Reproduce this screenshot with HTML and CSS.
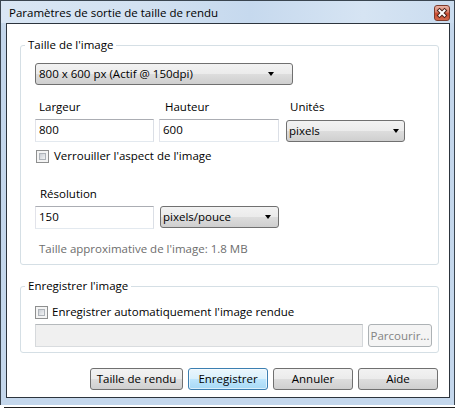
FILE: index.html
```html
<!DOCTYPE html>
<html lang="fr">
<head>
<meta charset="utf-8">
<title>Paramètres de sortie de taille de rendu</title>
<link rel="stylesheet" href="styles.css">
</head>
<body>
<div class="window">
  <div class="titlebar">
    <span class="title">Paramètres de sortie de taille de rendu</span>
    <span class="close">
      <svg width="14" height="14" viewBox="0 0 14 14">
        <path d="M4.5 4.5L9.5 9.5M9.5 4.5L4.5 9.5" stroke="#4b2219" stroke-width="4" stroke-linecap="square" fill="none"/>
        <path d="M4.5 4.5L9.5 9.5M9.5 4.5L4.5 9.5" stroke="#ffffff" stroke-width="2" stroke-linecap="square" fill="none"/>
      </svg>
    </span>
  </div>
  <div class="client">
    <fieldset class="group group-size">
      <legend>Taille de l'image</legend>
      <div class="group-body body-size">
        <div class="combo combo-preset"><span>800 x 600 px (Actif @ 150dpi)</span><i class="arrow"></i></div>
        <div class="dims">
          <span class="lbl lbl-w">Largeur</span>
          <span class="lbl lbl-h">Hauteur</span>
          <span class="lbl lbl-u">Unités</span>
          <span class="field field-w">800</span>
          <span class="field field-h">600</span>
          <span class="combo combo-units"><span>pixels</span><i class="arrow"></i></span>
        </div>
        <div class="check check-lock"><span class="box"></span><span>Verrouiller l'aspect de l'image</span></div>
        <div class="lbl lbl-res">Résolution</div>
        <div class="res-row">
          <span class="field field-res">150</span>
          <span class="combo combo-res"><span>pixels/pouce</span><i class="arrow"></i></span>
        </div>
        <div class="note">Taille approximative de l'image: 1.8 MB</div>
      </div>
    </fieldset>
    <fieldset class="group group-save">
      <legend>Enregistrer l'image</legend>
      <div class="group-body body-save">
        <div class="check check-auto"><span class="box"></span><span>Enregistrer automatiquement l'image rendue</span></div>
        <div class="path-row">
          <span class="field field-path disabled"></span>
          <span class="btn btn-browse disabled">Parcourir...</span>
        </div>
      </div>
    </fieldset>
    <div class="buttons">
      <span class="btn btn-size">Taille de rendu</span>
      <span class="btn btn-default btn-save">Enregistrer</span>
      <span class="btn btn-cancel">Annuler</span>
      <span class="btn btn-help">Aide</span>
    </div>
  </div>
</div>
<div class="edge"></div>
</body>
</html>
```

FILE: styles.css
```css
html, body {
  margin: 0;
  padding: 0;
  background: #ffffff;
}

body {
  font-family: "Open Sans", "Noto Sans", sans-serif;
  font-size: 11.5px;
  color: #000;
}

.window {
  width: 455px;
  height: 405px;
  box-sizing: border-box;
  border: 1px solid #3a4550;
  border-bottom: 0;
  padding: 0 4px 7px 5px;
  background: linear-gradient(to bottom, #cfdfef 0px, #c3d6eb 30px, #c4d7ec 100%);
  display: flex;
  flex-direction: column;
}

.titlebar {
  height: 22px;
  flex: none;
  display: flex;
  align-items: flex-start;
  justify-content: space-between;
  margin: 0 -4px 0 -5px;
  padding: 0 4px 0 5px;
  background: linear-gradient(to right, #d9e6f4 0%, #d2e1f1 30%, #c6d9ee 55%, #d6e4f3 80%, #cadcef 100%);
}

.title {
  padding-left: 3px;
  line-height: 24px;
  font-size: 11.5px;
  white-space: nowrap;
}

.close {
  margin-top: 4px;
  width: 16px;
  height: 16px;
  box-sizing: border-box;
  border: 1px solid #7d3b2c;
  border-radius: 3px;
  background: linear-gradient(to bottom, #eab4a6 0%, #dc8470 40%, #c9492e 55%, #d5694c 100%);
  display: flex;
  align-items: center;
  justify-content: center;
}

.close svg {
  display: block;
}

.client {
  flex: 1;
  background: #ffffff;
  border: 1px solid #2c343d;
  display: flex;
  flex-direction: column;
}

.group {
  margin: 0 10px 0 13px;
  padding: 0;
  border: 1px solid #d5dfe5;
  border-radius: 3px;
  min-width: 0;
}

.group legend {
  margin-left: 4px;
  padding: 0 3px;
  line-height: 16px;
}

.group-size {
  margin-top: 13px;
}

.group-save {
  margin-top: 13px;
}

.group-body {
  display: flex;
  flex-direction: column;
  align-items: flex-start;
}

.body-size {
  padding: 10px 0 7px 14px;
}

.body-save {
  padding: 10px 0 5px 14px;
}

/* combo boxes */
.combo {
  box-sizing: border-box;
  height: 22px;
  border: 1px solid #707070;
  border-radius: 3px;
  background: linear-gradient(to bottom, #f2f2f2 0%, #ebebeb 50%, #dddddd 50%, #cfcfcf 100%);
  display: flex;
  align-items: center;
  justify-content: space-between;
  padding-left: 2px;
  line-height: 18px;
  white-space: nowrap;
}

.arrow {
  width: 0;
  height: 0;
  border-left: 3.5px solid transparent;
  border-right: 3.5px solid transparent;
  border-top: 4px solid #000;
}

.combo-preset {
  width: 258px;
  padding-left: 3px;
  padding-right: 18px;
}

.combo-units {
  width: 119px;
  padding-right: 5px;
}

.combo-res {
  width: 119px;
  padding-right: 7px;
}

/* text fields */
.field {
  box-sizing: border-box;
  height: 23px;
  border: 1px solid;
  border-color: #abadb3 #dbdfe6 #e3e9ef #e2e3ea;
  background: #fff;
  padding-left: 3px;
  line-height: 20px;
  display: block;
}

.field-w { width: 119px; }
.field-h { width: 120px; }
.field-res { width: 119px; }

.field.disabled {
  background: #f0f0f0;
  border-color: #b5b9bc #d4d7da #d9dcdf #d6d9dc;
}

.field-path {
  width: 328px;
}

.dims {
  margin-top: 14px;
  display: grid;
  grid-template-columns: 124px 127px 119px;
  row-gap: 4px;
  align-items: center;
}

.lbl {
  line-height: 16px;
}

.lbl-w { padding-left: 4px; }
.lbl-h { padding-left: 6px; }
.lbl-u { padding-left: 4px; }

/* checkboxes */
.check {
  display: flex;
  align-items: center;
  line-height: 16px;
  white-space: nowrap;
}

.box {
  width: 13px;
  height: 13px;
  box-sizing: border-box;
  border: 1px solid #8e8f8f;
  background: #f4f4f4;
  padding: 2px;
  flex: none;
}

.box::after {
  content: "";
  display: block;
  width: 7px;
  height: 7px;
  box-sizing: border-box;
  border: 1px solid #aeb3b9;
  background: linear-gradient(135deg, #cbcfd5 0%, #f2f3f4 100%);
}

.check-lock {
  margin-top: 6px;
  padding-left: 1px;
  gap: 5px;
}

.check-auto {
  gap: 4px;
}

.lbl-res {
  margin-top: 22px;
  padding-left: 5px;
}

.res-row {
  margin-top: 4px;
  display: flex;
  gap: 6px;
}

.note {
  margin-top: 12px;
  padding-left: 4px;
  line-height: 16px;
  color: #6d6d6d;
}

.path-row {
  margin-top: 4px;
  display: flex;
  gap: 5px;
}

/* buttons */
.btn {
  box-sizing: border-box;
  height: 22px;
  border: 1px solid #707070;
  border-radius: 3px;
  background: linear-gradient(to bottom, #f2f2f2 0%, #ebebeb 50%, #dddddd 50%, #cfcfcf 100%);
  display: flex;
  align-items: center;
  justify-content: center;
  white-space: nowrap;
  line-height: 18px;
}

.btn-browse {
  width: 64px;
  height: 23px;
}

.btn.disabled {
  border-color: #adb2b5;
  background: #f4f4f4;
  color: #838383;
}

.btn-default {
  border-color: #3c7fb1;
  background: linear-gradient(to bottom, #eaf6fd 0%, #d9f0fc 50%, #bee6fd 50%, #a7d9f5 100%);
  box-shadow: inset 0 0 0 1px rgba(255, 255, 255, 0.6);
}

.buttons {
  margin: 15px 11px 0 0;
  display: flex;
  justify-content: flex-end;
  gap: 5px;
}

.btn-size { width: 93px; }
.btn-save { width: 80px; }
.btn-cancel { width: 80px; }
.btn-help { width: 80px; }

.edge {
  margin: 2px 0 0 4px;
  width: 451px;
  height: 1px;
  background: #1f1f1f;
}
```
